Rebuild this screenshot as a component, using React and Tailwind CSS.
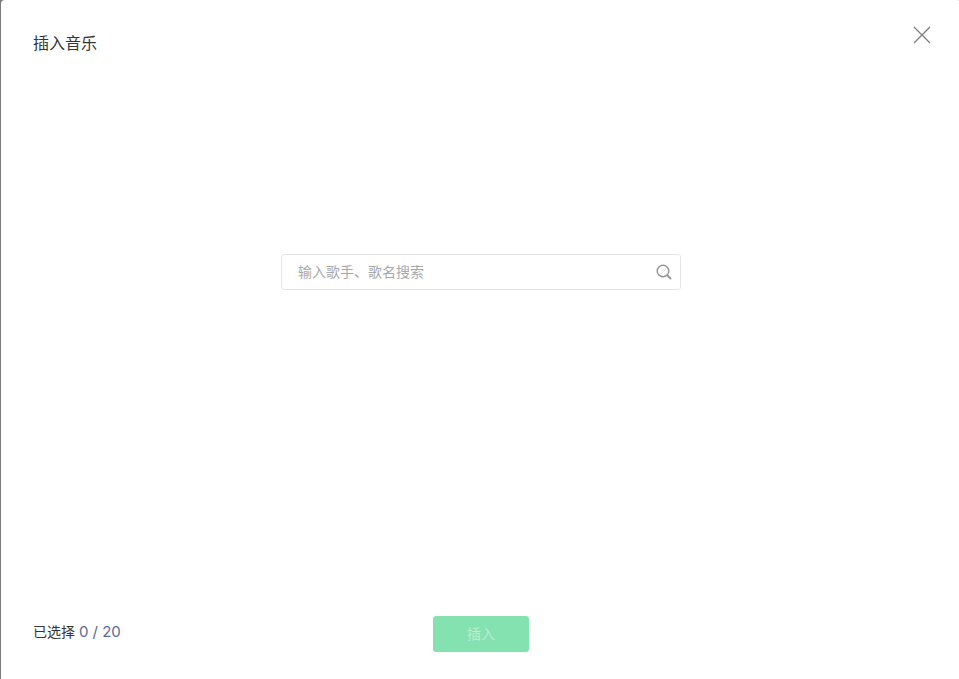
import React, { useState } from "react";

const MAX_SONGS = 20;

const CloseIcon = () => (
  <svg width="18" height="18" viewBox="0 0 18 18" fill="none" stroke="#7d7e80" strokeWidth="1.3">
    <path d="M1 1l16 16M17 1L1 17" />
  </svg>
);

const SearchIcon = () => (
  <svg width="16" height="16" viewBox="0 0 16 16" fill="none" stroke="#949494" strokeWidth="1.4">
    <circle cx="7" cy="7" r="5.8" />
    <path d="M11 11l4 4" strokeWidth="1.8" />
  </svg>
);

const App = () => {
  const [keyword, setKeyword] = useState("");
  const [selected] = useState([]);

  return (
    <div className="min-h-screen flex overflow-hidden bg-[#7b7b7b] pl-px font-['Liberation_Sans','Noto_Sans_CJK_SC',sans-serif]">
      <div
        role="dialog"
        aria-labelledby="music-title"
        className="-mr-0.5 flex flex-1 flex-col rounded-t bg-white text-[#353535]"
      >
        <div className="flex items-start justify-between pt-6 pr-7 pl-8">
          <h3 id="music-title" className="pt-2 text-base leading-6">
            插入音乐
          </h3>
          <button type="button" aria-label="关闭" className="p-0.5 cursor-pointer">
            <CloseIcon />
          </button>
        </div>

        <form
          onSubmit={(e) => e.preventDefault()}
          className="flex flex-1 flex-col items-center px-8 pt-[198px]"
        >
          <div className="flex h-9 w-full max-w-[400px] items-center rounded-[3px] border border-[#e4e4e4] pr-2 pl-4">
            <input
              type="text"
              aria-label="搜索音乐"
              placeholder="输入歌手、歌名搜索"
              value={keyword}
              onChange={(e) => setKeyword(e.target.value)}
              className="min-w-0 flex-1 text-sm leading-5 outline-none placeholder:text-[#a8a8a8]"
            />
            <button type="submit" aria-label="搜索" className="cursor-pointer">
              <SearchIcon />
            </button>
          </div>
        </form>

        <div className="grid grid-cols-3 items-start px-8 pb-[27px]">
          <p className="pt-1.5 text-sm leading-5">
            已选择{" "}
            <span className="font-[Inter] text-[15px] text-[#576b95]">
              {selected.length} / {MAX_SONGS}
            </span>
          </p>
          <button
            type="button"
            disabled={selected.length === 0}
            className="h-9 w-24 justify-self-center rounded-[3px] bg-[#07c160] text-sm text-white disabled:bg-[#84e1b0] disabled:text-[#b9eed2]"
          >
            插入
          </button>
        </div>
      </div>
    </div>
  );
};

export default App;
